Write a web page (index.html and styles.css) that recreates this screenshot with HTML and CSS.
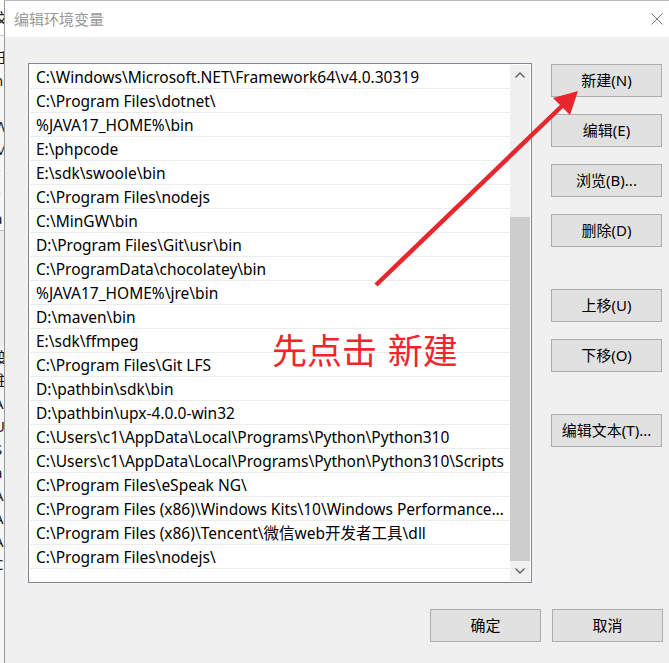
FILE: index.html
```html
<!DOCTYPE html>
<html lang="zh-CN">
<head>
<meta charset="utf-8">
<title>编辑环境变量</title>
<link rel="stylesheet" href="styles.css">
</head>
<body>
<div class="screen">
  <div class="behind">
    <div class="bh-top"><span class="ln">文</span></div>
    <div class="ln">任</div>
    <div class="ln">n</div>
    <div class="ln">t</div>
    <div class="ln">W</div>
    <div class="ln">M</div>
    <div class="ln">r</div>
    <div class="ln">r</div>
    <div class="ln">a</div>
    <div class="bh-gap"></div>
    <div class="ln">变</div>
    <div class="ln">主</div>
    <div class="ln">A</div>
    <div class="ln">U</div>
    <div class="ln">S</div>
    <div class="ln">a</div>
    <div class="ln">A</div>
    <div class="ln">A</div>
    <div class="ln">A</div>
    <div class="ln">C</div>
  </div>

  <div class="dialog">
    <div class="titlebar">
      <span class="title">编辑环境变量</span>
      <svg class="close" width="12" height="12" viewBox="0 0 12 12"><path d="M0.5 0.5 L11.5 11.5 M11.5 0.5 L0.5 11.5" stroke="#7a7a7a" stroke-width="1" fill="none"/></svg>
    </div>
    <div class="content">
      <div class="main">
        <div class="listbox">
          <ul class="items">
            <li>C:\Windows\Microsoft.NET\Framework64\v4.0.30319</li>
            <li>C:\Program Files\dotnet\</li>
            <li>%JAVA17_HOME%\bin</li>
            <li>E:\phpcode</li>
            <li>E:\sdk\swoole\bin</li>
            <li>C:\Program Files\nodejs</li>
            <li>C:\MinGW\bin</li>
            <li>D:\Program Files\Git\usr\bin</li>
            <li>C:\ProgramData\chocolatey\bin</li>
            <li>%JAVA17_HOME%\jre\bin</li>
            <li>D:\maven\bin</li>
            <li>E:\sdk\ffmpeg</li>
            <li>C:\Program Files\Git LFS</li>
            <li>D:\pathbin\sdk\bin</li>
            <li>D:\pathbin\upx-4.0.0-win32</li>
            <li>C:\Users\c1\AppData\Local\Programs\Python\Python310</li>
            <li>C:\Users\c1\AppData\Local\Programs\Python\Python310\Scripts</li>
            <li>C:\Program Files\eSpeak NG\</li>
            <li>C:\Program Files (x86)\Windows Kits\10\Windows Performance Toolkit\</li>
            <li>C:\Program Files (x86)\Tencent\微信web开发者工具\dll</li>
            <li>C:\Program Files\nodejs\</li>
          </ul>
          <div class="scrollbar">
            <div class="sb-arrow">
              <svg width="10" height="6" viewBox="0 0 10 6"><path d="M0.5 5.5 L5 1 L9.5 5.5" stroke="#606060" stroke-width="1.4" fill="none"/></svg>
            </div>
            <div class="sb-track"><div class="sb-thumb"></div></div>
            <div class="sb-arrow">
              <svg width="10" height="6" viewBox="0 0 10 6"><path d="M0.5 0.5 L5 5 L9.5 0.5" stroke="#606060" stroke-width="1.4" fill="none"/></svg>
            </div>
          </div>
        </div>
        <div class="side">
          <div class="group">
            <button class="btn">新建(N)</button>
            <button class="btn">编辑(E)</button>
            <button class="btn">浏览(B)...</button>
            <button class="btn">删除(D)</button>
          </div>
          <div class="group">
            <button class="btn">上移(U)</button>
            <button class="btn">下移(O)</button>
          </div>
          <div class="group">
            <button class="btn">编辑文本(T)...</button>
          </div>
        </div>
      </div>
      <div class="footer">
        <button class="btn">确定</button>
        <button class="btn">取消</button>
      </div>
    </div>
  </div>

  <svg class="anno-arrow" width="669" height="663" viewBox="0 0 669 663">
    <line x1="376" y1="285" x2="563" y2="105" stroke="#e8262d" stroke-width="4.5"/>
    <polygon points="578,91 553,98 570,115" fill="#e8262d"/>
  </svg>
  <div class="anno-text">先点击 新建</div>
</div>
</body>
</html>
```

FILE: styles.css
```css
* { box-sizing: border-box; }

html, body {
  margin: 0;
  padding: 0;
  width: 669px;
  height: 663px;
  overflow: hidden;
  background: #f0f0f0;
}

.screen {
  position: relative;
  width: 669px;
  height: 663px;
  display: flex;
  font-family: "Noto Sans", "Noto Sans CJK SC", sans-serif;
  font-size: 15px;
  color: #000;
}

/* window peeking out behind the dialog */
.behind {
  width: 4px;
  flex: none;
  overflow: hidden;
  background: #f7f7f7;
  display: flex;
  flex-direction: column;
  font-family: "Noto Sans", "Noto Sans CJK SC", sans-serif;
  font-size: 15px;
  color: #1a1a1a;
}
.behind .bh-top {
  height: 36px;
  padding-top: 7px;
  border-bottom: 1px solid #c8c8c8;
  background: #fff;
  margin-bottom: 10px;
}
.behind .ln {
  display: block;
  height: 23px;
  line-height: 23px;
  white-space: nowrap;
  text-indent: -6px;
}
.behind .bh-gap {
  height: 116px;
  border-top: 1px solid #c0c0c0;
  background: #ececec;
}

.dialog {
  flex: 1;
  display: flex;
  flex-direction: column;
  border-left: 1px solid #9a9a9a;
  border-top: 1px solid #b8b8b8;
  background: #f0f0f0;
}

.titlebar {
  height: 36px;
  flex: none;
  background: #fff;
  display: flex;
  align-items: center;
  justify-content: space-between;
  padding-left: 9px;
  padding-right: 6px;
}
.title {
  font-family: "Noto Sans CJK SC", sans-serif;
  font-size: 15px;
  color: #999;
  margin-top: -1px;
}
.close { display: block; }

.content {
  flex: 1;
  display: flex;
  flex-direction: column;
  padding: 26px 6px 0 23px;
}

.main {
  display: flex;
  gap: 19px;
}

.listbox {
  width: 504px;
  height: 520px;
  flex: none;
  border: 1px solid #828790;
  background: #fff;
  padding: 1px;
  display: flex;
}

.items {
  list-style: none;
  margin: 0;
  padding: 0;
  width: 480px;
  flex: none;
}
.items li {
  height: 24px;
  line-height: 22px;
  font-size: 15.5px;
  border-bottom: 1px solid #ececec;
  padding: 1px 4px 0 6px;
  white-space: nowrap;
  overflow: hidden;
  text-overflow: ellipsis;
}

.scrollbar {
  width: 20px;
  flex: none;
  display: flex;
  flex-direction: column;
  background: #f0f0f0;
}
.sb-arrow {
  height: 20px;
  flex: none;
  display: flex;
  align-items: center;
  justify-content: center;
}
.sb-arrow svg { display: block; }
.sb-track {
  flex: 1;
  display: flex;
  flex-direction: column;
  padding-top: 132px;
}
.sb-thumb {
  flex: 1;
  background: #cdcdcd;
}

.side {
  display: flex;
  flex-direction: column;
  gap: 42px;
  padding-top: 1px;
}
.group {
  display: flex;
  flex-direction: column;
  gap: 17px;
}

.btn {
  width: 111px;
  height: 33px;
  background: #e1e1e1;
  border: 1px solid #adadad;
  border-radius: 0;
  padding: 0;
  margin: 0;
  font-family: "Noto Sans", "Noto Sans CJK SC", sans-serif;
  font-size: 15px;
  color: #000;
  line-height: 31px;
  text-align: center;
}

.footer {
  display: flex;
  justify-content: flex-end;
  gap: 11px;
  margin-top: 26px;
}

/* red annotation drawn on top of the screenshot */
.anno-text {
  position: absolute;
  left: 272px;
  top: 325px;
  font-family: "Noto Sans CJK SC", sans-serif;
  font-size: 35px;
  line-height: 48px;
  color: #f0262b;
  white-space: nowrap;
  word-spacing: 3px;
}
.anno-arrow {
  position: absolute;
  left: 0;
  top: 0;
  pointer-events: none;
}
```
